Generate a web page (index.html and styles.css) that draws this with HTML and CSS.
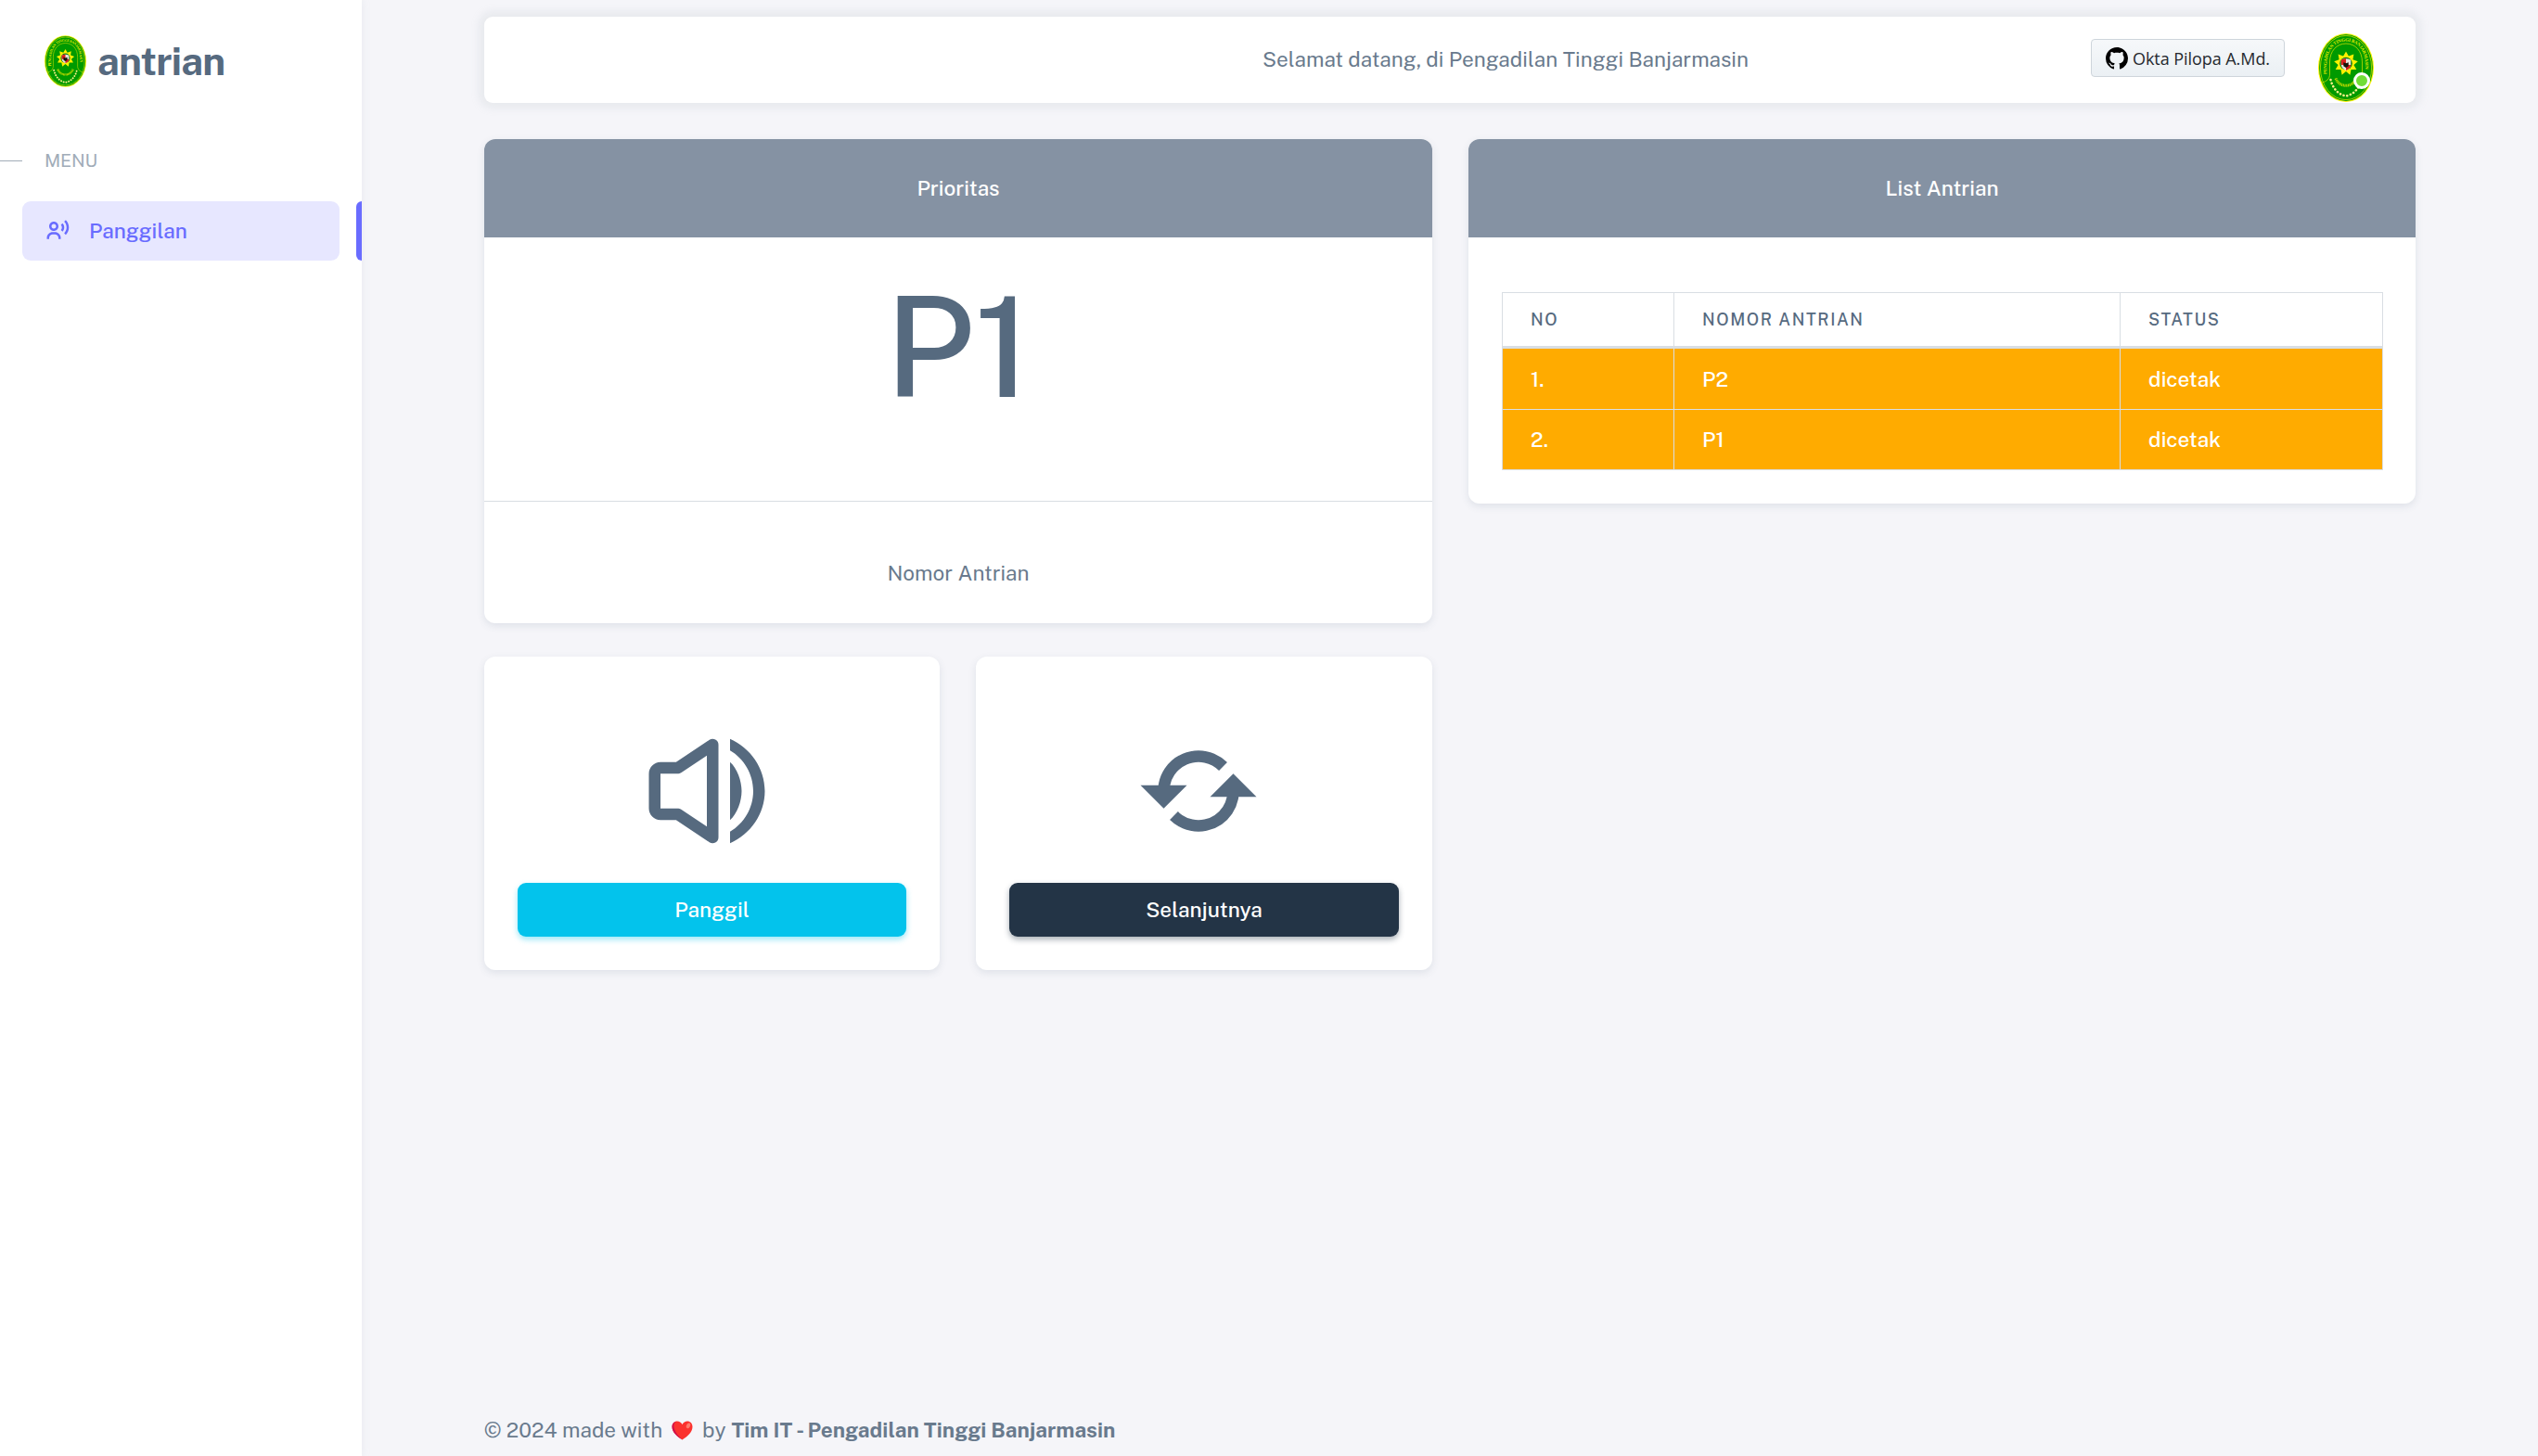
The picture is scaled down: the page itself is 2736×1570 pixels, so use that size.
FILE: index.html
```html
<!DOCTYPE html>
<html lang="id">
<head>
<meta charset="utf-8">
<title>antrian</title>
<link rel="stylesheet" href="styles.css">
</head>
<body>
<aside class="sidebar">
  <div class="brand">
    <svg class="brand-logo" viewBox="0 0 60 74">
      <g id="emblem">
        <ellipse cx="30" cy="37" rx="30" ry="37" fill="#fff200"/>
        <ellipse cx="30" cy="37" rx="28.9" ry="35.9" fill="#009a00"/>
        <ellipse cx="30" cy="37" rx="27.6" ry="34.6" fill="none" stroke="#e6e600" stroke-width=".7"/>
        <path id="ring" d="M9.300 44V34C9.300 18 18 8.600 30 8.600S50.700 18 50.700 34V44" fill="none"/>
        <text class="emblem-text"><textPath href="#ring" textLength="88">PENGADILAN TINGGI BANJARMASIN</textPath></text>
        <path d="M4 53C9 52 12.500 49 12.500 44V31C12.500 19 20 11 30 11S47.500 19 47.500 31V44C47.500 49 51 52 56 53" fill="none" stroke="#c8dc00" stroke-width=".8"/>
        <path d="M30 19.500L32.900 24.500 38.400 22.500 37.400 28.300 42.800 30.200 38.400 34 41.300 39 35.500 39 34.400 44.700 30 41 25.600 44.700 24.500 39 18.700 39 21.600 34 17.200 30.200 22.600 28.300 21.600 22.500 27.100 24.500z" fill="#fff200"/>
        <circle cx="30" cy="32.500" r="6.800" fill="#0a7a16"/>
        <path d="M24.800 28.500q5.200-2.500 10.400 0v5q0 4-5.200 6.500-5.200-2.500-5.200-6.500z" fill="#e9e5dc"/>
        <path d="M24.800 28.500q2.500-1.300 5.200-1.300V34h-5.200zM30 34h5.200q-.2 3.700-5.200 6z" fill="#d8201c"/>
        <path d="M27.300 31.200l2.700 1 2.700-1v4l-2.700 1.800-2.700-1.800z" fill="#15140c"/>
        <path d="M19 48.500q3 7.500 11 7.800 8-.3 11-7.800" fill="none" stroke="#c8dc00" stroke-width="3" stroke-dasharray="1 .6"/>
        <path d="M13.500 50C16 60 22 66 30 67.500 38 66 44 60 46.500 50" fill="none" stroke="#fff08a" stroke-width="2.500" stroke-linecap="round" stroke-dasharray=".2 3.600"/>
      </g>
    </svg>
    <span class="brand-name">antrian</span>
  </div>
  <div class="menu-header"><span class="menu-line"></span><span>MENU</span></div>
  <nav class="menu-row">
    <a class="menu-link">
      <svg class="menu-icon" viewBox="0 0 24 24"><path d="M8 12c2.280 0 4-1.720 4-4s-1.720-4-4-4-4 1.720-4 4 1.720 4 4 4zm0-6c1.178 0 2 .822 2 2s-.822 2-2 2-2-.822-2-2 .822-2 2-2zm1 7H7c-2.757 0-5 2.243-5 5v1h2v-1c0-1.654 1.346-3 3-3h2c1.654 0 3 1.346 3 3v1h2v-1c0-2.757-2.243-5-5-5zm9.364-10.364L16.950 4.050C18.271 5.373 19 7.131 19 9s-.729 3.627-2.050 4.950l1.414 1.414C20.064 13.663 21 11.403 21 9s-.936-4.663-2.636-6.364z"/><path d="M15.535 5.464 14.121 6.878C14.688 7.445 15 8.198 15 9s-.312 1.555-.879 2.122l1.414 1.414C16.479 11.592 17 10.337 17 9s-.521-2.592-1.465-3.536z"/></svg>
      <span>Panggilan</span>
    </a>
    <span class="menu-marker"></span>
  </nav>
</aside>

<main class="page">
  <header class="navbar">
    <p class="welcome">Selamat datang, di Pengadilan Tinggi Banjarmasin</p>
    <a class="gh-button">
      <svg class="gh-icon" viewBox="0 0 16 16"><path d="M8 0c4.420 0 8 3.580 8 8a8.013 8.013 0 0 1-5.450 7.590c-.4.080-.55-.17-.55-.38 0-.27.010-1.130.010-2.200 0-.75-.25-1.230-.54-1.480 1.780-.2 3.650-.88 3.650-3.950 0-.88-.31-1.590-.82-2.150.080-.2.360-1.020-.080-2.120 0 0-.67-.22-2.200.82-.64-.18-1.320-.27-2-.27-.68 0-1.360.090-2 .27-1.530-1.030-2.200-.82-2.200-.82-.44 1.100-.16 1.920-.080 2.120-.51.560-.82 1.280-.82 2.150 0 3.060 1.860 3.750 3.640 3.950-.23.200-.44.550-.51 1.070-.46.210-1.610.550-2.330-.66-.15-.24-.6-.83-1.230-.82-.67.010-.27.380.010.530.340.190.730.900.820 1.130.160.450.680 1.310 2.690.940 0 .670.010 1.300.010 1.490 0 .210-.15.450-.55.380A7.995 7.995 0 0 1 0 8c0-4.420 3.580-8 8-8Z"/></svg>
      <span>Okta Pilopa A.Md.</span>
    </a>
    <div class="avatar">
      <svg class="avatar-image" viewBox="0 0 60 74"><use href="#emblem"/></svg>
      <span class="avatar-status"></span>
    </div>
  </header>

  <section class="columns">
    <div class="column">
      <article class="card">
        <h2 class="card-header">Prioritas</h2>
        <div class="ticket">P1</div>
        <div class="card-footer">Nomor Antrian</div>
      </article>
      <div class="actions">
        <article class="card action">
          <svg class="action-icon" viewBox="0 0 24 24"><path d="M16 21c3.527-1.547 5.999-5.091 5.999-9S19.527 4.547 16 3v2c2.387 1.386 3.999 4.047 3.999 7S18.387 17.614 16 19v2z"/><path d="M16 7v10c1.225-1.100 2-3.229 2-5s-.775-3.900-2-5zM4 17h2.697l5.748 3.832a1.004 1.004 0 0 0 1.027.050A1 1 0 0 0 14 20V4a1 1 0 0 0-1.554-.832L6.697 7H4c-1.103 0-2 .897-2 2v6c0 1.103.897 2 2 2zm0-8h3c.033 0 .061-.016.093-.019a1.027 1.027 0 0 0 .38-.116c.026-.015.057-.017.082-.033L12 5.868v12.264l-4.445-2.964c-.025-.017-.056-.020-.082-.033a.986.986 0 0 0-.382-.116C7.059 15.016 7.032 15 7 15H4V9z"/></svg>
          <button class="btn btn-info">Panggil</button>
        </article>
        <article class="card action">
          <svg class="action-icon" viewBox="0 0 24 24"><path d="M10 11H7.101l.001-.009a4.956 4.956 0 0 1 .752-1.787 5.054 5.054 0 0 1 2.200-1.811c.302-.128.617-.226.938-.291a5.078 5.078 0 0 1 2.018 0 4.978 4.978 0 0 1 2.525 1.361l1.416-1.412a7.036 7.036 0 0 0-2.224-1.501 6.921 6.921 0 0 0-1.315-.408 7.079 7.079 0 0 0-2.819 0 6.940 6.940 0 0 0-1.316.409 7.040 7.040 0 0 0-3.080 2.534 6.978 6.978 0 0 0-1.054 2.505c-.028.135-.043.273-.063.410H2l4 4 4-4zm4 2h2.899l-.001.008a4.976 4.976 0 0 1-2.103 3.138 4.943 4.943 0 0 1-1.787.752 5.073 5.073 0 0 1-2.017 0 4.956 4.956 0 0 1-1.787-.752 5.072 5.072 0 0 1-.74-.61L7.050 16.950a7.032 7.032 0 0 0 2.225 1.500c.424.180.867.317 1.315.408a7.070 7.070 0 0 0 2.818 0 7.031 7.031 0 0 0 4.395-2.945 6.974 6.974 0 0 0 1.053-2.503c.027-.135.043-.273.063-.410H22l-4-4-4 4z"/></svg>
          <button class="btn btn-dark">Selanjutnya</button>
        </article>
      </div>
    </div>

    <article class="card list-card">
      <h2 class="card-header">List Antrian</h2>
      <table class="queue">
        <colgroup><col class="col-no"><col class="col-number"><col></colgroup>
        <thead><tr><th>NO</th><th>NOMOR ANTRIAN</th><th>STATUS</th></tr></thead>
        <tbody>
          <tr class="first"><td>1.</td><td>P2</td><td>dicetak</td></tr>
          <tr><td>2.</td><td>P1</td><td>dicetak</td></tr>
        </tbody>
      </table>
    </article>
  </section>

  <footer class="footer">
    <span>© 2024 made with</span>
    <svg class="heart" viewBox="0 0 23 21"><path d="M11.500 20.500C7 17.500.5 13 .5 6.500.5 2.800 3 .500 6 .500c2.400 0 4.400 1.300 5.500 3.600C12.600 1.800 14.600.500 17 .500c3 0 5.500 2.300 5.500 6 0 6.500-6.500 11-11 14z" fill="#fb322e"/><path d="M11.500 20.500C7 17.500.5 13 .5 6.500.5 3.300 2.300 1.200 4.700.700 2.500 2.300 1.900 5.300 2.900 8.500c1.300 4.500 5 8.500 8.600 12z" fill="#d0104c"/><ellipse cx="18" cy="5.300" rx="2" ry="3" transform="rotate(25 18 5.300)" fill="#ff7a6b"/></svg>
    <span class="by">by</span>
    <strong>Tim IT - Pengadilan Tinggi Banjarmasin</strong>
  </footer>
</main>
</body>
</html>
```
FILE: styles.css
```css
* { box-sizing: border-box; }

body {
  display: flex;
  min-height: 1570px;
  margin: 0;
  background: #f5f5f9;
  color: #697a8d;
  font: 400 22.5px/34px "Public Sans", Inter, sans-serif;
}

.emblem-text {
  fill: #e8ec00;
  font: 700 5px "Liberation Serif", serif;
}

/* Sidebar */
.sidebar {
  flex: none;
  width: 390px;
  background: #fff;
  box-shadow: 0 0 9px rgba(161, 172, 184, .15);
}

.brand {
  display: flex;
  align-items: center;
  gap: 12px;
  height: 96px;
  margin-top: 18px;
  padding-left: 48px;
}

.brand-logo { width: 45px; height: 56px; }

.brand-name {
  color: #566a7f;
  font-size: 42px;
  font-weight: 700;
  letter-spacing: -.75px;
}

.menu-header {
  display: flex;
  align-items: center;
  gap: 24px;
  height: 30px;
  margin-top: 44px;
  color: #a1acb8;
  font-size: 19.500px;
  letter-spacing: -.2px;
}

.menu-line { width: 24px; height: 1px; background: #a1acb8; }

.menu-row {
  display: flex;
  justify-content: space-between;
  height: 64px;
  margin-top: 29px;
  padding-left: 24px;
}

.menu-link {
  display: flex;
  align-items: center;
  gap: 18px;
  width: 342px;
  padding-left: 24px;
  border-radius: 9px;
  background: #e7e7ff;
  color: #696cff;
  font-weight: 500;
}

.menu-icon { width: 30px; height: 30px; fill: currentColor; }

.menu-marker { width: 6px; border-radius: 6px 0 0 6px; background: #696cff; }

/* Page */
.page {
  display: flex;
  flex: 1;
  flex-direction: column;
  padding: 18px 132px 11px;
}

.navbar {
  display: flex;
  height: 93px;
  padding-right: 45px;
  border-radius: 9px;
  background: #fff;
  box-shadow: 0 0 9px 6px rgba(161, 172, 184, .15);
}

.welcome { margin: 29px auto 0 839px; }

.gh-button {
  display: flex;
  align-items: center;
  gap: 5px;
  width: 209px;
  height: 41px;
  margin-top: 24px;
  padding-left: 15px;
  border: 1px solid #ced5db;
  border-radius: 4px;
  background: linear-gradient(#f6f8fa, #ebf0f4);
  color: #25292e;
  font: 500 18px/24px "Open Sans", sans-serif;
  letter-spacing: -.06px;
  white-space: nowrap;
}

.gh-icon { flex: none; width: 24px; height: 24px; }

.avatar {
  position: relative;
  width: 60px;
  height: 74px;
  margin: 18px 0 0 36px;
}

.avatar-image { display: block; width: 60px; height: 74px; }

.avatar-status {
  position: absolute;
  right: 4px;
  bottom: 14px;
  width: 18px;
  height: 18px;
  border: 3px solid #fff;
  border-radius: 50%;
  background: #71dd37;
}

.columns {
  display: grid;
  grid-template-columns: 1022px 1021px;
  align-items: start;
  gap: 39px;
  margin-top: 39px;
}

.card {
  overflow: hidden;
  border-radius: 12px;
  background: #fff;
  box-shadow: 0 3px 9px rgba(67, 89, 113, .12);
}

.card-header {
  height: 106px;
  margin: 0;
  background: #8592a3;
  color: #fff;
  font-size: 22.500px;
  font-weight: 500;
  line-height: 106px;
  text-align: center;
}

.ticket {
  height: 284px;
  padding-top: 35px;
  color: #566a7f;
  font-size: 150px;
  font-weight: 500;
  line-height: 165px;
  text-align: center;
}

.card-footer {
  height: 132px;
  padding-top: 60px;
  border-top: 1px solid #d9dee3;
  text-align: center;
}

.actions {
  display: grid;
  grid-template-columns: 491px 492px;
  gap: 39px;
  margin-top: 36px;
}

.action {
  display: flex;
  flex-direction: column;
  align-items: center;
  height: 338px;
  padding: 70px 36px 36px;
}

.action-icon {
  width: 150px;
  height: 150px;
  margin: 0 12px 24px 0;
  fill: #566a7f;
}

.btn {
  width: 100%;
  height: 58px;
  padding: 0;
  border: 0;
  border-radius: 9px;
  color: #fff;
  font: inherit;
  font-weight: 500;
}

.btn-info { background: #03c3ec; box-shadow: 0 3px 6px rgba(3, 195, 236, .4); }

.btn-dark { background: #233446; box-shadow: 0 3px 6px rgba(35, 52, 70, .4); }

/* Queue table */
.list-card { padding-bottom: 36px; }

.queue {
  width: 950px;
  margin: 59px 0 0 36px;
  border-collapse: collapse;
  table-layout: fixed;
}

.col-no { width: 185px; }
.col-number { width: 481px; }

.queue th,
.queue td {
  padding: 0 0 0 30px;
  border: 1px solid #d9dee3;
  text-align: left;
}

.queue th {
  height: 59px;
  border-bottom-width: 3px;
  color: #566a7f;
  font-size: 18px;
  font-weight: 500;
  letter-spacing: 1.550px;
}

.queue td {
  height: 65px;
  background: #ffab00;
  color: #fff;
  font-weight: 500;
}

.queue .first td { height: 67px; }

/* Footer */
.footer {
  display: flex;
  align-items: center;
  margin-top: auto;
  white-space: nowrap;
}

.heart { width: 23px; height: 21px; margin: 0 10px; }
.by { margin-right: 6px; }
.footer strong { font-weight: 700; }
```
